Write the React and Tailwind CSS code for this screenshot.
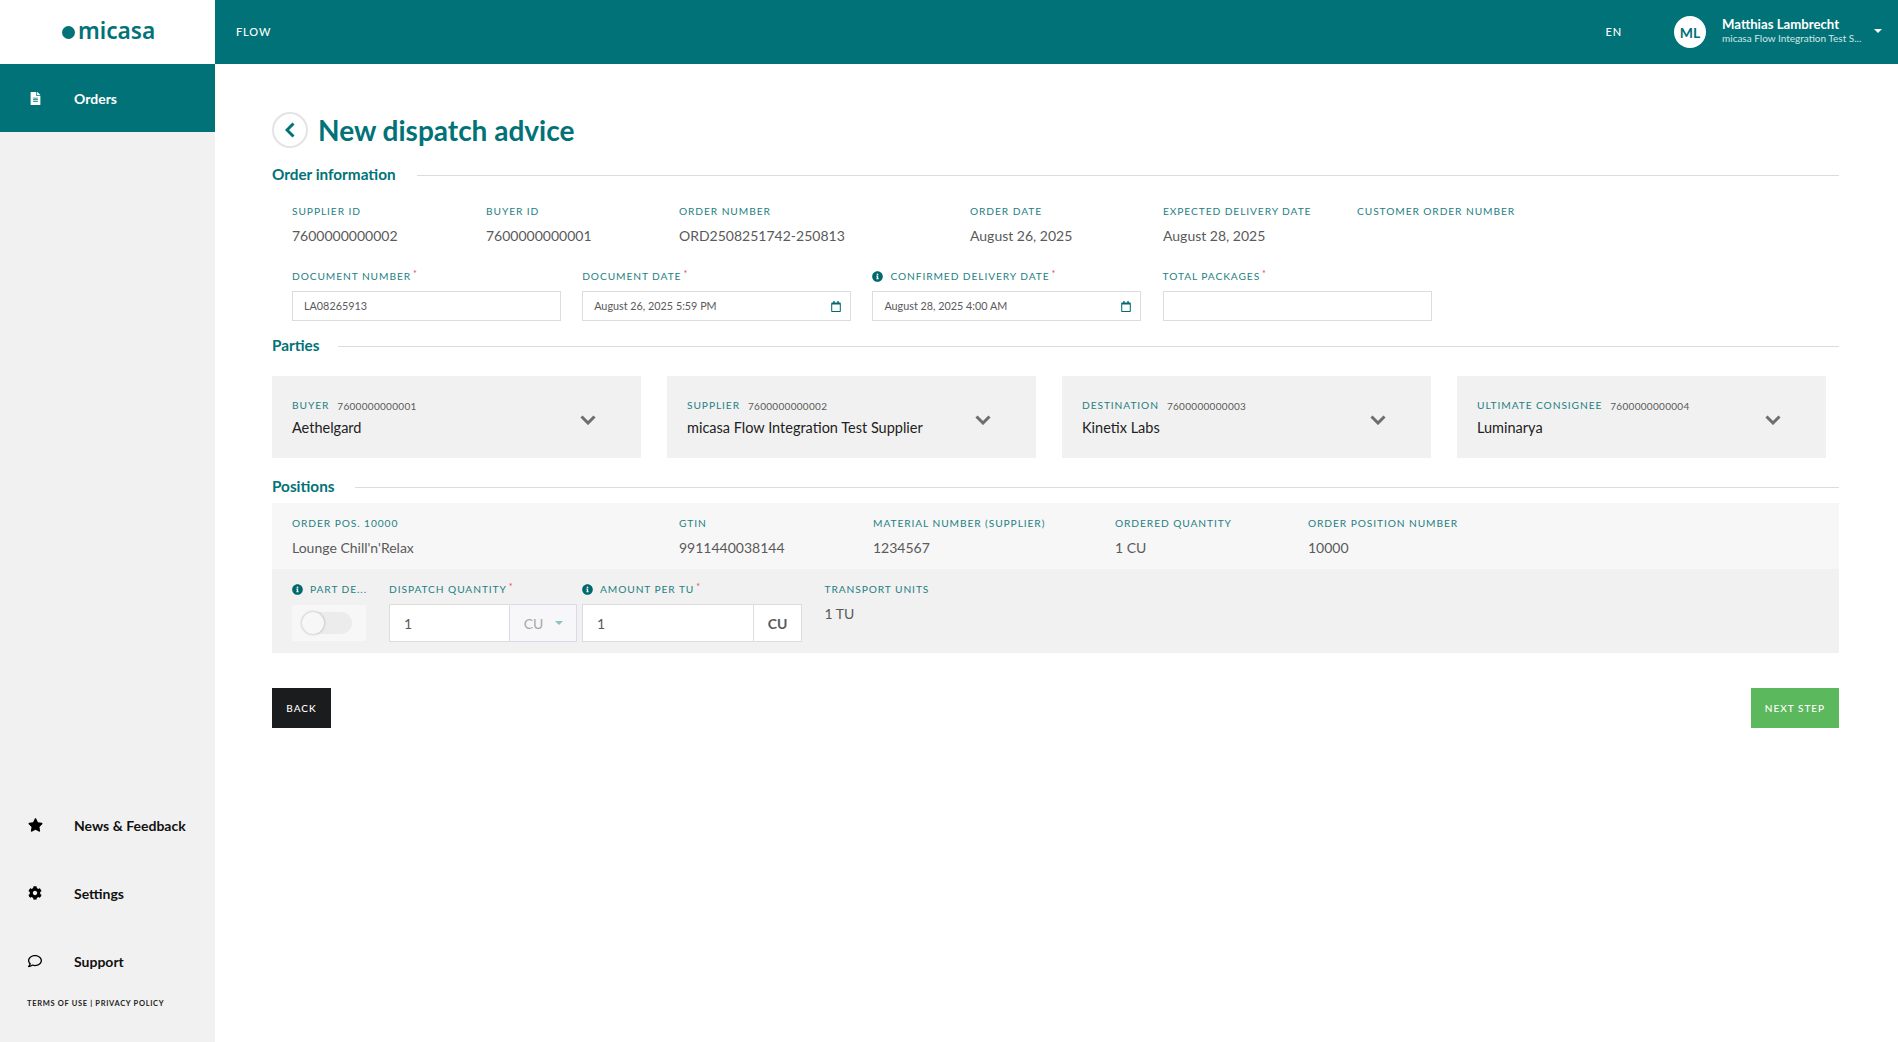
import React from "react";
import { FaFileAlt, FaStar, FaCog, FaRegComment, FaInfoCircle, FaRegCalendar } from "react-icons/fa";

const Label = ({ children, req, info, className = "" }) => (
  <div className={`flex items-center h-[14px] text-[10.2px] leading-[14px] tracking-[0.09em] uppercase text-[#1d7f83] whitespace-nowrap ${className}`}>
    {info && <FaInfoCircle className="text-[#01696d] w-[11px] h-[11px] mr-[7px] shrink-0" />}
    <span>{children}</span>
    {req && <span className="text-[#e8455a] text-[9px] ml-[2px] -mt-[5px]">*</span>}
  </div>
);

const Info = ({ label, value, w }) => (
  <div className={`shrink-0 ${w}`}>
    <Label>{label}</Label>
    <div className="mt-[8px] h-[20px] text-[14px] leading-[20px] text-[#5a5a5a] whitespace-nowrap">{value}</div>
  </div>
);

const Field = ({ label, value, info, cal }) => (
  <div className="w-[269px] shrink-0">
    <Label req info={info}>{label}</Label>
    <div className="mt-[8px] h-[30px] border border-[#dcdcdc] bg-white flex items-center justify-between pl-[11px] pr-[9px] text-[10.8px] text-[#5a5a5a]">
      <span>{value}</span>
      {cal && <FaRegCalendar className="text-[#01696d] w-[10px] h-[11px] mt-[1px]" />}
    </div>
  </div>
);

const Section = ({ title, lineClass = "" }) => (
  <div className="flex items-center h-[20px]">
    <span className="text-[15.3px] font-bold text-[#017277] leading-[20px] -mt-[1px]">{title}</span>
    <div className={`flex-1 h-[1px] mt-[2px] bg-[#dcdcdc] ${lineClass}`} />
  </div>
);

const Chevron = ({ className = "" }) => (
  <svg viewBox="0 0 16 10" className={className} fill="none" stroke="currentColor" strokeWidth="3">
    <path d="M1.5 1.5 L8 8 L14.5 1.5" />
  </svg>
);

const Party = ({ label, id, name }) => (
  <div className="w-[369px] h-[82px] bg-[#f1f1f1] flex items-center justify-between pl-[20px] pr-[45px] shrink-0">
    <div className="mt-[3px]">
      <div className="flex items-center h-[14px] whitespace-nowrap">
        <span className="text-[10.2px] tracking-[0.09em] uppercase text-[#1d7f83]">{label}</span>
        <span className="text-[10px] tracking-[0.03em] text-[#5a5a5a] ml-[8px]">{id}</span>
      </div>
      <div className="mt-[5px] text-[14.5px] leading-[20px] text-[#222] whitespace-nowrap">{name}</div>
    </div>
    <Chevron className="w-[16px] h-[10px] text-[#6e6e6e] mt-[5px]" />
  </div>
);

const NavItem = ({ icon, children }) => (
  <div className="h-[68px] flex items-center text-[14px] font-bold text-[#111]">
    <div className="w-[74px] pl-[27px] flex">{icon}</div>
    <span>{children}</span>
  </div>
);

export default function App() {
  return (
    <div className="h-screen w-full flex flex-col bg-white overflow-hidden" style={{ fontFamily: "Lato, 'Liberation Sans', sans-serif" }}>
      <header className="h-[64px] flex shrink-0 bg-[#017277] text-white">
        <div className="w-[215px] bg-white flex items-center pl-[62px] shrink-0">
          <span className="w-[13px] h-[13px] rounded-full bg-[#017277] mr-[3px]" />
          <span className="text-[22.7px] leading-none font-semibold text-[#017277] -mt-[1px]" style={{ fontFamily: "'Noto Sans', sans-serif" }}>micasa</span>
        </div>
        <div className="flex-1 flex items-center pl-[21px] pr-[16px]">
          <span className="text-[11px] font-medium tracking-[0.08em]">FLOW</span>
          <span className="ml-auto text-[11px] font-medium tracking-[0.08em]">EN</span>
          <div className="ml-[52px] w-[32px] h-[32px] rounded-full bg-white text-[#017277] font-bold text-[14px] flex items-center justify-center">ML</div>
          <div className="ml-[16px] w-[141px]">
            <div className="text-[13.2px] font-bold leading-[16px] -mt-[3px]">Matthias Lambrecht</div>
            <div className="text-[10px] leading-[13px] text-[#d3e8e8] whitespace-nowrap">micasa Flow Integration Test S...</div>
          </div>
          <div className="ml-[11px] w-0 h-0 border-x-[4px] border-x-transparent border-t-[4px] border-t-white -mt-[3px]" />
        </div>
      </header>

      <div className="flex-1 flex min-h-0">
        <aside className="w-[215px] bg-[#f1f1f1] flex flex-col shrink-0">
          <div className="h-[68px] bg-[#017277] text-white flex items-center text-[14px] font-bold">
            <div className="w-[74px] pl-[30px] flex"><FaFileAlt className="w-[11px] h-[13px]" /></div>
            <span>Orders</span>
          </div>
          <div className="mt-auto pb-[32px]">
            <NavItem icon={<FaStar className="w-[15px] h-[14px] text-black ml-[1px]" />}>News &amp; Feedback</NavItem>
            <NavItem icon={<FaCog className="w-[14px] h-[14px] text-black ml-[1px]" />}>Settings</NavItem>
            <NavItem icon={<FaRegComment className="w-[16px] h-[14px] text-black" />}>Support</NavItem>
            <div className="pl-[27px] h-[12px] text-[7.5px] leading-[12px] font-bold tracking-[0.09em] text-[#222] mt-[3px]">TERMS OF USE | PRIVACY POLICY</div>
          </div>
        </aside>

        <main className="flex-1 pl-[57px] pr-[59px] pt-[48px] min-w-0">
          <div className="flex items-center h-[36px]">
            <div className="w-[36px] h-[36px] rounded-full border-2 border-[#e4e4e4] flex items-center justify-center">
              <svg viewBox="0 0 10 16" className="w-[10px] h-[16px] text-[#017277]" fill="none" stroke="currentColor" strokeWidth="3"><path d="M8.5 1.5 L2 8 L8.5 14.5" /></svg>
            </div>
            <h1 className="ml-[10px] text-[28px] font-bold leading-[36px] text-[#017277] whitespace-nowrap">New dispatch advice</h1>
          </div>

          <div className="mt-[16px]"><Section title="Order information" lineClass="ml-[21px]" /></div>

          <div className="flex pl-[20px] mt-[20px]">
            <Info w="w-[194px]" label="Supplier ID" value="7600000000002" />
            <Info w="w-[193px]" label="Buyer ID" value="7600000000001" />
            <Info w="w-[291px]" label="Order number" value="ORD2508251742-250813" />
            <Info w="w-[193px]" label="Order date" value="August 26, 2025" />
            <Info w="w-[194px]" label="Expected delivery date" value="August 28, 2025" />
            <Info w="w-[194px]" label="Customer order number" value="" />
          </div>

          <div className="flex pl-[20px] gap-[21.2px] mt-[23px]">
            <Field label="Document number" value="LA08265913" />
            <Field label="Document date" value="August 26, 2025 5:59 PM" cal />
            <Field label="Confirmed delivery date" value="August 28, 2025 4:00 AM" info cal />
            <Field label="Total packages" value="" />
          </div>

          <div className="mt-[14px]"><Section title="Parties" lineClass="ml-[19px]" /></div>

          <div className="flex gap-[26px] mt-[21px]">
            <Party label="Buyer" id="7600000000001" name="Aethelgard" />
            <Party label="Supplier" id="7600000000002" name="micasa Flow Integration Test Supplier" />
            <Party label="Destination" id="7600000000003" name="Kinetix Labs" />
            <Party label="Ultimate consignee" id="7600000000004" name="Luminarya" />
          </div>

          <div className="mt-[18px]"><Section title="Positions" lineClass="ml-[20px]" /></div>

          <div className="mt-[7px] bg-[#f7f7f7] h-[66px] flex pl-[20px] pt-[13px]">
            <Info w="w-[387px]" label="Order pos. 10000" value="Lounge Chill'n'Relax" />
            <Info w="w-[194px]" label="GTIN" value="9911440038144" />
            <Info w="w-[242px]" label="Material number (supplier)" value="1234567" />
            <Info w="w-[193px]" label="Ordered quantity" value="1 CU" />
            <Info w="w-[194px]" label="Order position number" value="10000" />
          </div>

          <div className="bg-[#f1f1f1] h-[84px] flex pl-[20px] pt-[13px]">
            <div className="w-[74px] shrink-0">
              <Label info>Part de...</Label>
              <div className="mt-[9px] h-[36px] bg-[#f7f7f7] flex items-center pl-[10px]">
                <div className="relative w-[50px] h-[22px] rounded-full bg-[#ececec]">
                  <div className="absolute left-0 top-0 w-[22px] h-[22px] rounded-full bg-[#f7f7f7] shadow-[0_0_3px_rgba(0,0,0,0.3)]" />
                </div>
              </div>
            </div>
            <div className="ml-[23px] w-[188px] shrink-0">
              <Label req>Dispatch quantity</Label>
              <div className="mt-[8px] flex h-[38px]">
                <div className="w-[122px] bg-white border border-[#dcdcdc] flex items-center pl-[14px] text-[14px] text-[#5a5a5a]">1</div>
                <div className="w-[69px] bg-[#f7f7f9] border border-[#dcdce8] -ml-[1px] flex items-center pl-[14px] text-[14px] text-[#a8a8a8]">
                  <span>CU</span>
                  <span className="ml-[12px] w-0 h-0 border-x-[4px] border-x-transparent border-t-[4px] border-t-[#8fc2c2]" />
                </div>
              </div>
            </div>
            <div className="ml-[5px] w-[220px] shrink-0">
              <Label req info>Amount per TU</Label>
              <div className="mt-[8px] flex h-[38px]">
                <div className="w-[172px] bg-white border border-[#dcdcdc] flex items-center pl-[14px] text-[14px] text-[#5a5a5a]">1</div>
                <div className="w-[49px] bg-white border border-[#dcdcdc] -ml-[1px] flex items-center justify-center text-[14px] font-bold text-[#5a5a5a]">CU</div>
              </div>
            </div>
            <div className="ml-[22.5px]">
              <Label>Transport units</Label>
              <div className="mt-[8px] h-[20px] text-[14px] leading-[20px] text-[#5a5a5a]">1 TU</div>
            </div>
          </div>

          <div className="flex justify-between mt-[35px]">
            <button className="w-[59px] h-[40px] bg-[#1b1c1e] text-white text-[10px] font-medium tracking-[0.1em]">BACK</button>
            <button className="w-[88px] h-[40px] bg-[#5cb85c] text-white text-[10px] font-medium tracking-[0.1em]">NEXT STEP</button>
          </div>
        </main>
      </div>
    </div>
  );
}
